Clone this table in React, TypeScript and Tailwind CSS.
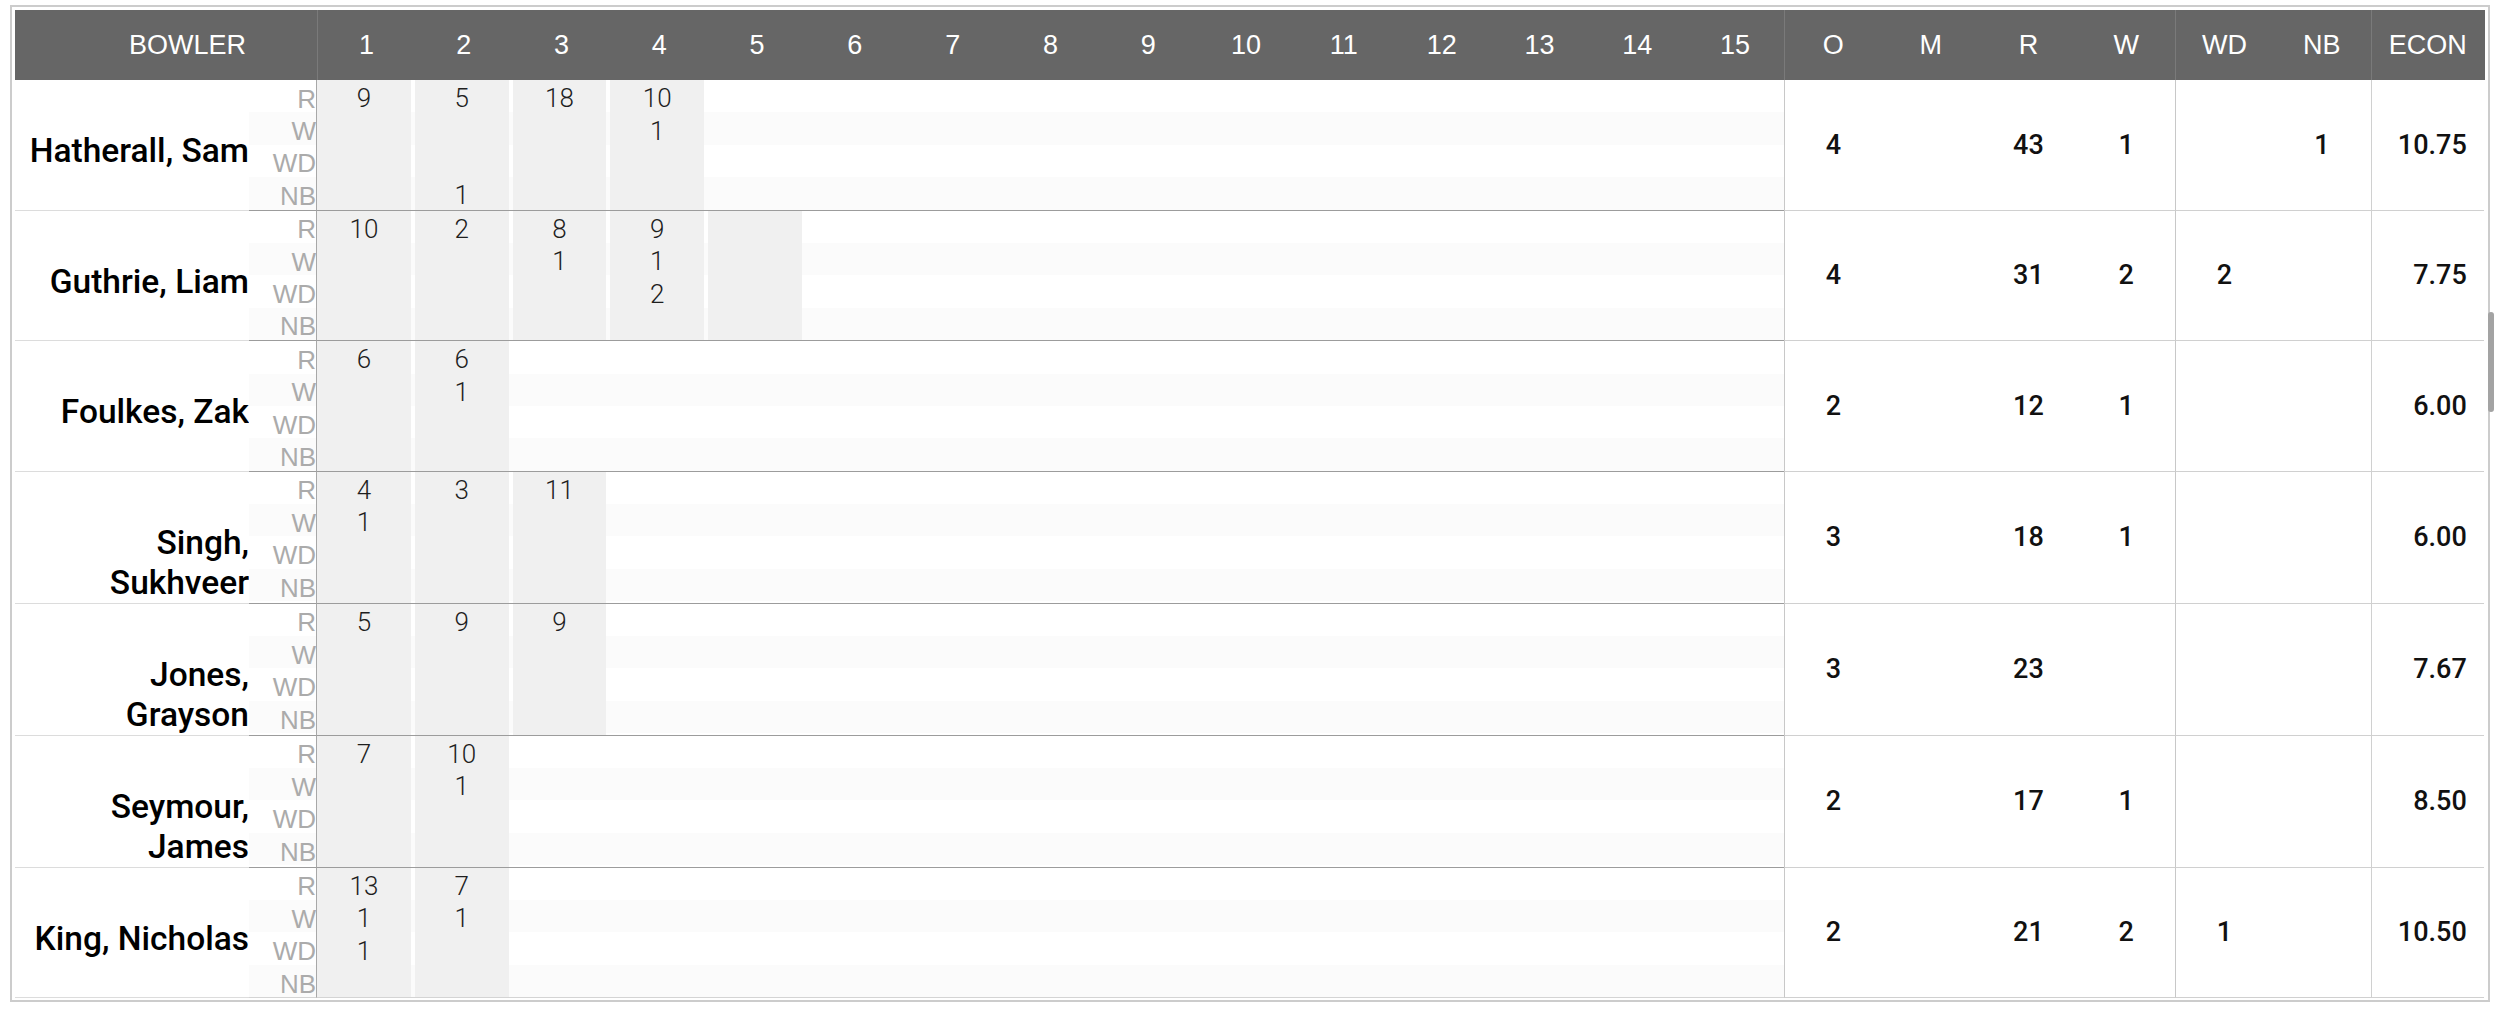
import React from "react";

type Over = { r?: number; w?: number; wd?: number; nb?: number };

interface Bowler {
  name: string;
  overs: Over[];
  o: string;
  m: string;
  r: string;
  w: string;
  wd: string;
  nb: string;
  econ: string;
}

const bowlers: Bowler[] = [
  {
    name: "Hatherall, Sam",
    overs: [{ r: 9 }, { r: 5, nb: 1 }, { r: 18 }, { r: 10, w: 1 }],
    o: "4", m: "", r: "43", w: "1", wd: "", nb: "1", econ: "10.75",
  },
  {
    name: "Guthrie, Liam",
    overs: [{ r: 10 }, { r: 2 }, { r: 8, w: 1 }, { r: 9, w: 1, wd: 2 }, {}],
    o: "4", m: "", r: "31", w: "2", wd: "2", nb: "", econ: "7.75",
  },
  {
    name: "Foulkes, Zak",
    overs: [{ r: 6 }, { r: 6, w: 1 }],
    o: "2", m: "", r: "12", w: "1", wd: "", nb: "", econ: "6.00",
  },
  {
    name: "Singh, Sukhveer",
    overs: [{ r: 4, w: 1 }, { r: 3 }, { r: 11 }],
    o: "3", m: "", r: "18", w: "1", wd: "", nb: "", econ: "6.00",
  },
  {
    name: "Jones, Grayson",
    overs: [{ r: 5 }, { r: 9 }, { r: 9 }],
    o: "3", m: "", r: "23", w: "", wd: "", nb: "", econ: "7.67",
  },
  {
    name: "Seymour, James",
    overs: [{ r: 7 }, { r: 10, w: 1 }],
    o: "2", m: "", r: "17", w: "1", wd: "", nb: "", econ: "8.50",
  },
  {
    name: "King, Nicholas",
    overs: [{ r: 13, w: 1, wd: 1 }, { r: 7, w: 1 }],
    o: "2", m: "", r: "21", w: "2", wd: "1", nb: "", econ: "10.50",
  },
];

const overNums = Array.from({ length: 15 }, (_, i) => i + 1);
const subLabels = ["R", "W", "WD", "NB"];
const stripe = ["bg-white", "bg-[#fbfbfb]", "bg-white", "bg-[#fbfbfb]"];

function OverCell({ over, last }: { over?: Over; last: boolean }) {
  const border = last ? "border-[#d4d4d4]" : "border-[#9c9c9c]";
  const vals = over ? [over.r, over.w, over.wd, over.nb] : [];
  return (
    <div className={`relative border-b ${border}`}>
      {stripe.map((s, i) => (
        <div key={i} className={`h-[32.4px] ${s}`} />
      ))}
      {over && (
        <div className="absolute inset-y-0 left-0 right-[4px] flex flex-col bg-[#f0f0f0]">
          {vals.map((v, i) => (
            <div
              key={i}
              className="flex h-[32.4px] items-center justify-center pt-[5px] font-['Roboto','Liberation_Sans',sans-serif] text-[26px] font-light text-[#1e1e1e]"
            >
              {v ?? ""}
            </div>
          ))}
        </div>
      )}
    </div>
  );
}

function BowlerRow({ b, last }: { b: Bowler; last: boolean }) {
  const darkLine = last ? "border-[#d4d4d4]" : "border-[#9c9c9c]";
  const stat =
    "flex items-center justify-center border-b border-[#d0d0d0] font-['Roboto',sans-serif] text-[27px] font-medium text-[#111]";
  return (
    <div className="grid grid-cols-[234px_68px_repeat(21,97.81px)_113px]">
      <div className="border-b border-[#dcdcdc] pl-[9px] pt-[51px] text-right font-['Roboto',sans-serif] text-[33.5px] font-medium leading-[40px] text-black">
        {b.name}
      </div>
      <div className={`border-b border-r border-r-[#a8a8a8] ${darkLine}`}>
        {subLabels.map((l, i) => (
          <div
            key={l}
            className={`flex h-[32.4px] items-center justify-end pt-[5px] text-[26px] leading-none text-[#ababab] ${stripe[i]}`}
          >
            {l}
          </div>
        ))}
      </div>
      {overNums.map((n) => (
        <OverCell key={n} over={b.overs[n - 1]} last={last} />
      ))}
      <div className={`${stat} border-l border-l-[#c8c8c8]`}>{b.o}</div>
      <div className={stat}>{b.m}</div>
      <div className={stat}>{b.r}</div>
      <div className={stat}>{b.w}</div>
      <div className={`${stat} border-l border-l-[#c8c8c8]`}>{b.wd}</div>
      <div className={stat}>{b.nb}</div>
      <div className="flex items-center justify-end border-b border-l border-[#d0d0d0] pr-[17px] font-['Roboto',sans-serif] text-[27px] font-medium text-[#111]">
        {b.econ}
      </div>
    </div>
  );
}

export default function App() {
  const head = "flex items-center justify-center";
  return (
    <div className="relative h-[1026px] w-[2500px] bg-white font-['Liberation_Sans',Arial,sans-serif]">
      <div className="ml-[10px] mt-[5px] w-[2480px] border-2 border-[#cccccc] p-[3px] pb-[2px]">
        {/* header */}
        <div className="grid h-[70px] grid-cols-[234px_68px_repeat(21,97.81px)_113px] bg-[#666666] text-[27px] text-white">
          <div className="col-span-2 flex items-center justify-end pr-[71px]">BOWLER</div>
          {overNums.map((n) => (
            <div key={n} className={`${head} ${n === 1 ? "border-l border-[#7a7a7a]" : ""}`}>
              {n}
            </div>
          ))}
          <div className={`${head} border-l border-[#7a7a7a]`}>O</div>
          <div className={head}>M</div>
          <div className={head}>R</div>
          <div className={head}>W</div>
          <div className={`${head} border-l border-[#7a7a7a]`}>WD</div>
          <div className={head}>NB</div>
          <div className={`${head} border-l border-[#7a7a7a]`}>ECON</div>
        </div>
        {bowlers.map((b, i) => (
          <BowlerRow key={b.name} b={b} last={i === bowlers.length - 1} />
        ))}
      </div>
      {/* scrollbar thumb */}
      <div className="absolute left-[2488px] top-[307px] h-[100px] w-[6px] rounded-full bg-[#a3a3a3]" />
    </div>
  );
}
